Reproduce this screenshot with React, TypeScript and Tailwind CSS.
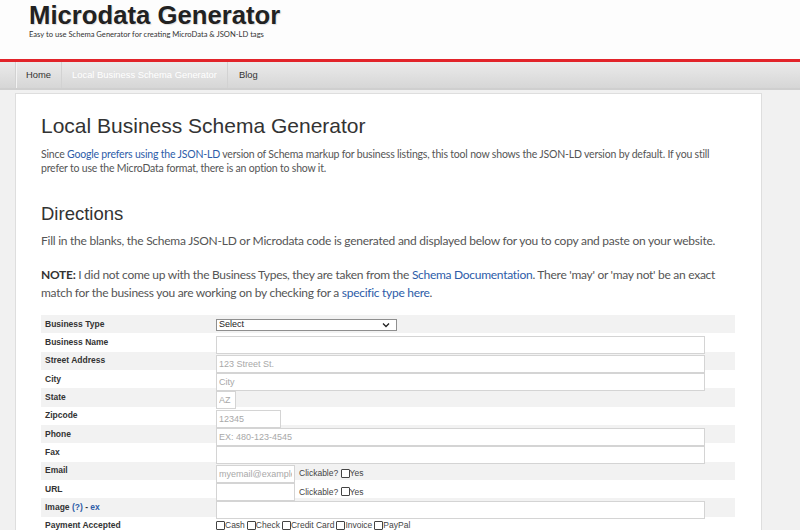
import React from 'react'

const BODY_FONT = "font-['Lato','Noto_Sans',sans-serif]"

type Row = {
  label: React.ReactNode
  field: React.ReactNode
}

const inputBase =
  'mt-[3px] h-[18px] border border-[#d4d4d4] bg-white px-[2px] text-[9px] text-[#333] placeholder:text-[#a8a8a8] outline-none'

function Check({ label }: { label: string }) {
  return (
    <label className="inline-flex items-center">
      <span className="inline-block h-[9px] w-[9px] rounded-[1px] border border-[#444] bg-white" />
      <span>{label}</span>
    </label>
  )
}

function Clickable() {
  return (
    <div className="ml-[4px] mt-[3px] flex h-[18px] items-center text-[8.5px] text-[#444]">
      Clickable?&nbsp;
      <Check label="Yes" />
    </div>
  )
}

const ROWS: Row[] = [
  {
    label: 'Business Type',
    field: (
      <div className="mt-[4px] flex h-[12px] w-[181px] items-center justify-between border border-[#8f8f8f] bg-white pl-[2px] pr-[6px] text-[9px] text-[#222]">
        <span>Select</span>
        <svg width="8" height="6" viewBox="0 0 8 6" fill="none">
          <path d="M1 1.5 4 4.5 7 1.5" stroke="#222" strokeWidth="1.3" />
        </svg>
      </div>
    ),
  },
  { label: 'Business Name', field: <input className={`${inputBase} w-[489px]`} /> },
  { label: 'Street Address', field: <input className={`${inputBase} w-[489px]`} placeholder="123 Street St." /> },
  { label: 'City', field: <input className={`${inputBase} w-[489px]`} placeholder="City" /> },
  { label: 'State', field: <input className={`${inputBase} w-[20px]`} placeholder="AZ" /> },
  { label: 'Zipcode', field: <input className={`${inputBase} w-[65px]`} placeholder="12345" /> },
  { label: 'Phone', field: <input className={`${inputBase} w-[489px]`} placeholder="EX: 480-123-4545" /> },
  { label: 'Fax', field: <input className={`${inputBase} w-[489px]`} /> },
  {
    label: 'Email',
    field: (
      <div className="flex">
        <input className={`${inputBase} w-[79px]`} placeholder="myemail@example.com" />
        <Clickable />
      </div>
    ),
  },
  {
    label: 'URL',
    field: (
      <div className="flex">
        <input className={`${inputBase} w-[79px]`} />
        <Clickable />
      </div>
    ),
  },
  {
    label: (
      <>
        Image&nbsp;<span className="text-[#2d5ca8]">(?)</span>&nbsp;-&nbsp;<span className="text-[#2d5ca8]">ex</span>
      </>
    ),
    field: <input className={`${inputBase} w-[489px]`} />,
  },
  {
    label: 'Payment Accepted',
    field: (
      <div className="mt-[3px] flex h-[12px] items-center gap-[2px] text-[8.5px] text-[#444]">
        <Check label="Cash" />
        <Check label="Check" />
        <Check label="Credit Card" />
        <Check label="Invoice" />
        <Check label="PayPal" />
      </div>
    ),
  },
]

export default function App() {
  return (
    <div className="h-[530px] w-[800px] overflow-hidden bg-[#f1f1f1] font-['Liberation_Sans',Arial,sans-serif]">
      {/* Header */}
      <header className="h-[59px] bg-[#fdfdfd] pl-[29px] pt-[1px]">
        <h1 className="text-[25.7px] font-bold leading-[28px] text-[#222] [text-shadow:1px_1px_1px_rgba(0,0,0,0.12)]">
          Microdata Generator
        </h1>
        <p className={`${BODY_FONT} text-[7.6px] leading-[10px] text-[#333]`}>
          Easy to use Schema Generator for creating MicroData &amp; JSON-LD tags
        </p>
      </header>
      <div className="h-[3px] bg-[#e2242a]" />

      {/* Nav */}
      <nav className="flex h-[28px] border-b-[2px] border-[#cfcfcf] bg-gradient-to-b from-[#ebebeb] to-[#d6d6d6] pl-[15px]">
        <ul className="flex text-[9.4px] text-[#333]">
          <li className="flex items-center border-x border-[#d2d2d2] px-[10px] shadow-[inset_1px_0_0_#f3f3f3]">Home</li>
          <li className="flex items-center border-r border-[#d2d2d2] px-[10px] text-white">
            Local Business Schema Generator
          </li>
          <li className="flex items-center px-[11px]">Blog</li>
        </ul>
      </nav>

      {/* Main panel */}
      <main className="px-[15px] pt-[3px]">
        <div className="h-[600px] w-[747px] border border-[#dedede] bg-white pl-[25px] pr-[26px]">
          <h2 className="mt-[20px] text-[21px] leading-[24px] text-[#333]">Local Business Schema Generator</h2>
          <p className={`${BODY_FONT} mt-[9px] whitespace-nowrap text-[10.5px] leading-[14px] tracking-[-0.19px] text-[#555]`}>
            Since <a className="text-[#2d5ca8]">Google prefers using the JSON-LD</a> version of Schema markup for
            business listings, this tool now shows the JSON-LD version by default. If you still
            <br />
            prefer to use the MicroData format, there is an option to show it.
          </p>

          <h2 className="mt-[28px] text-[18.5px] leading-[22px] text-[#333]">Directions</h2>
          <p className={`${BODY_FONT} mt-[7px] whitespace-nowrap text-[12px] leading-[18px] tracking-[-0.25px] text-[#555]`}>
            Fill in the blanks, the Schema JSON-LD or Microdata code is generated and displayed below for you to copy
            and paste on your website.
          </p>
          <p className={`${BODY_FONT} mt-[16px] whitespace-nowrap text-[12px] leading-[18px] tracking-[-0.28px] text-[#555]`}>
            <strong className="font-bold text-[#333]">NOTE:</strong> I did not come up with the Business Types, they
            are taken from the <a className="text-[#2d5ca8]">Schema Documentation</a>. There 'may' or 'may not' be an
            exact
            <br />
            match for the business you are working on by checking for a{' '}
            <a className="text-[#2d5ca8]">specific type here</a>.
          </p>

          {/* Form table */}
          <div className="mt-[13px] w-[694px]">
            {ROWS.map((row, i) => (
              <div key={i} className={`flex h-[18.33px] ${i % 2 === 0 ? 'bg-[#f2f2f2]' : 'bg-white'}`}>
                <div className="flex w-[175px] items-center pl-[4px] text-[8.5px] font-bold text-[#333]">
                  {row.label}
                </div>
                <div className="flex items-start">{row.field}</div>
              </div>
            ))}
          </div>
        </div>
      </main>
    </div>
  )
}
